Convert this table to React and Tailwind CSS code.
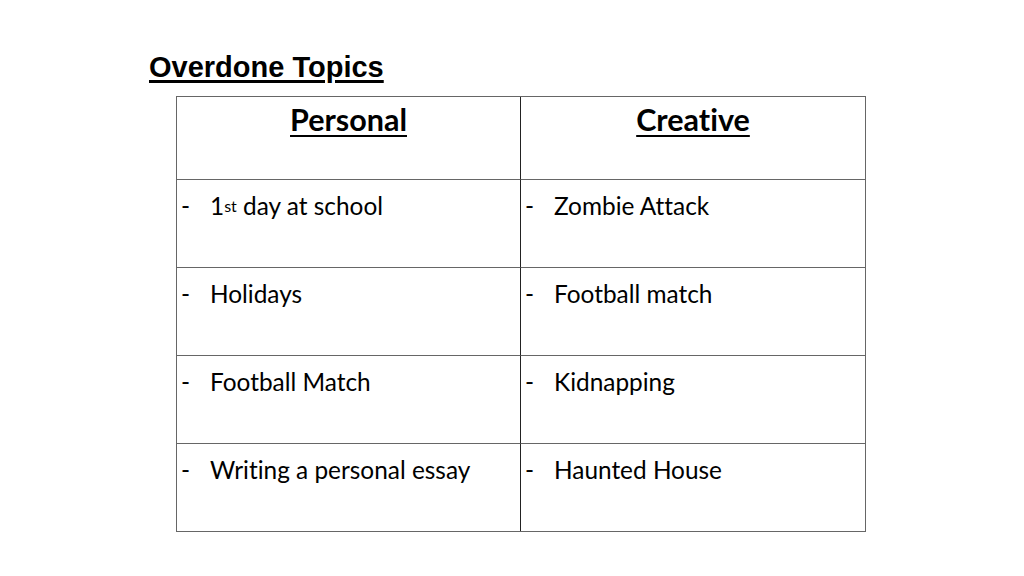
import React from 'react';

const rows = [
  [<>1<sup className="text-[16px] relative -top-[3px]">st</sup> day at school</>, 'Zombie Attack'],
  ['Holidays', 'Football match'],
  ['Football Match', 'Kidnapping'],
  ['Writing a personal essay', 'Haunted House'],
];

const Cell = ({ children, last }) => (
  <div className={`h-[88px] border-t border-[#666] pl-[4px] pt-[11px] ${last ? '' : 'border-r border-r-[#222]'}`}>
    <div className="flex text-[24.4px] leading-[30px] text-black">
      <span className="w-[29px] shrink-0">-</span>
      <span>{children}</span>
    </div>
  </div>
);

const App = () => {
  return (
    <div className="w-[1024px] h-[576px] bg-white relative overflow-hidden">
      <div className="pl-[149px] pt-[52px]">
        <h1 className="text-[29px] leading-[30px] font-bold underline decoration-[2.5px] underline-offset-[3px] text-black" style={{ fontFamily: '"Liberation Sans", Arial, sans-serif' }}>
          Overdone Topics
        </h1>
      </div>
      <div className="ml-[176px] mt-[14px] w-[690px] border border-[#666] [font-variant-ligatures:none]" style={{ fontFamily: 'Lato, "Open Sans", sans-serif' }}>
        <div className="grid grid-cols-[344px_344px]">
          <div className="h-[82px] border-r border-r-[#222] flex justify-center pt-[4px]">
            <span className="text-[30.5px] leading-[36px] font-bold underline decoration-2 underline-offset-[4px]">Personal</span>
          </div>
          <div className="h-[82px] flex justify-center pt-[4px]">
            <span className="text-[30.5px] leading-[36px] font-bold underline decoration-2 underline-offset-[4px]">Creative</span>
          </div>
          {rows.map((r, i) => (
            <React.Fragment key={i}>
              <Cell>{r[0]}</Cell>
              <Cell last>{r[1]}</Cell>
            </React.Fragment>
          ))}
        </div>
      </div>
    </div>
  );
};

export default App;
